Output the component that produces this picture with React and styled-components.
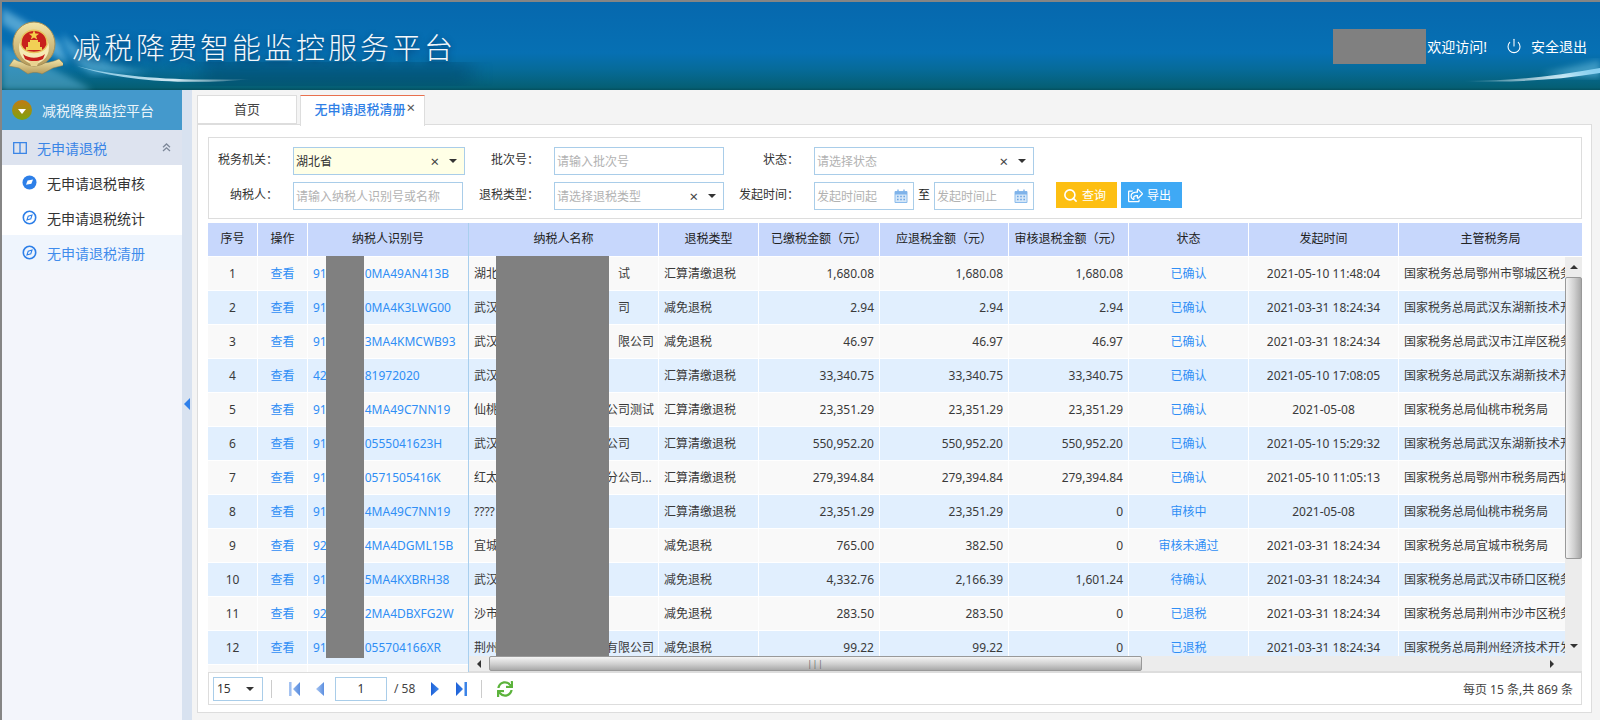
import React from 'react';
import styled, { createGlobalStyle } from 'styled-components';
import { Power, Search } from 'lucide-react';
import { FaRegShareSquare, FaSync } from 'react-icons/fa';

const Global = createGlobalStyle`
  html, body { margin: 0; padding: 0; background: #f4f4f4; }
  body { font-family: "Noto Sans", "Noto Sans CJK SC", sans-serif; font-size: 12px; color: #333; }
  * { box-sizing: border-box; }
`;

const Frame = styled.div`
  width: 1600px; height: 720px; overflow: hidden;
  border-top: 2px solid #858585; border-left: 2px solid #858585;
  display: flex; flex-direction: column;
`;
const Header = styled.header`
  position: relative; flex: none; height: 88px; display: flex; align-items: center;
  padding: 0 13px 0 5px; overflow: hidden;
  background: linear-gradient(180deg, #0668ae 0%, #0670b3 58%, #066b9a 76%, #055f74 97%, #04505f 100%);
`;
const HeaderArt = styled.svg`
  position: absolute; left: 0; top: 0; width: 1598px; height: 88px; pointer-events: none;
`;
const LogoMark = styled.svg`
  position: relative; flex: none; width: 56px; height: 54px; margin-top: 4px;
`;
const Title = styled.h1`
  position: relative; margin: 0 0 0 9px; font-size: 29px; font-weight: 300; letter-spacing: 3px; line-height: 1;
  color: #f4f8fb; text-shadow: 0 2px 6px rgba(0, 40, 80, .75); white-space: nowrap;
  font-family: "Noto Sans CJK SC", sans-serif;
`;
const UserBox = styled.div`
  position: relative; margin-left: auto; display: flex; align-items: center; color: #fff; font-size: 14px;
`;
const UserMask = styled.div`
  width: 93px; height: 35px; background: #808080; margin-right: 1px;
`;
const Logout = styled.span`
  display: flex; align-items: center; gap: 9px; margin-left: 19px;
`;

const Body = styled.div`
  flex: 1; min-height: 0; display: flex;
`;
const Sidebar = styled.aside`
  flex: none; width: 180px; background: #f3f5fb; display: flex; flex-direction: column;
`;
const SideTitle = styled.div`
  height: 40px; background: #4499cc; color: #eaf4fa; font-size: 14px;
  display: flex; align-items: center; gap: 10px; padding-left: 10px;
`;
const Orb = styled.span`
  width: 20px; height: 20px; border-radius: 50%;
  background: linear-gradient(180deg, #c27a12, #7ea30f);
  display: flex; align-items: center; justify-content: center;
  &::after { content: ""; margin-top: 2px; border: 4px solid transparent; border-top: 5px solid #fff; border-bottom: 0; }
`;
const SideGroup = styled.div`
  height: 35px; background: #dde3ef; color: #3a85e6; font-size: 14px;
  display: flex; align-items: center; gap: 10px; padding: 0 11px 0 11px;
`;
const Fold = styled.span`
  margin-left: auto; display: flex; color: #7d8899;
`;
const SideItem = styled.div`
  height: 35px; display: flex; align-items: center; gap: 10px; padding-left: 20px; font-size: 14px;
  background: ${p => (p.$active ? '#eff5fd' : '#fff')};
  color: ${p => (p.$active ? '#3f8cec' : '#333')};
`;
const Splitter = styled.div`
  flex: none; width: 10px; background: #d8e2f0; display: flex; align-items: center; justify-content: center;
  padding-bottom: 2px;
  &::after { content: ""; border: 6px solid transparent; border-right: 6px solid #2e7fea; border-left: 0; }
`;

const Main = styled.main`
  flex: none; width: 1400px; padding: 5px 0 0 5px; display: flex; flex-direction: column;
`;
const Tabs = styled.div`
  flex: none; display: flex; height: 30px; gap: 3px; position: relative; z-index: 1;
`;
const Tab = styled.div`
  height: ${p => (p.$active ? '31px' : '29px')};
  width: ${p => (p.$active ? '125px' : '100px')};
  background: #fff; font-size: 13px; text-align: center; line-height: 27px;
  border: 1px solid #ddd; ${p => (p.$active ? 'border-bottom: 0;' : '')}
  border-top-color: ${p => (p.$active ? '#e8704e' : '#ddd')};
  color: ${p => (p.$active ? '#2f7fe6' : '#444')};
  font-weight: ${p => (p.$active ? 500 : 400)};
  padding-right: ${p => (p.$active ? '5px' : '0')};
  position: relative;
`;
const TabClose = styled.span`
  position: absolute; right: 9px; top: 3px; font-size: 15px; line-height: 17px; font-weight: 400; color: #555;
`;
const Panel = styled.section`
  width: 1395px; height: 589px; margin-top: -1px; background: #fff; border: 1px solid #ddd;
  padding: 12px 9px 0 10px; display: flex; flex-direction: column;
`;
const FilterBox = styled.form`
  flex: none; height: 82px; border: 1px solid #ddd; padding-top: 9px; margin: 0 0 4px;
  display: grid; grid-template-columns: 84px 172px 89px 170px 90px 220px auto;
  grid-auto-rows: 28px; row-gap: 7px;
`;
const FieldLabel = styled.label`
  text-align: right; padding-right: 15px; line-height: 26px; color: #333; white-space: nowrap;
`;
const Field = styled.div`
  width: ${p => p.$w}px; height: 28px; border: 1px solid #a9cde9; display: flex; align-items: center;
  padding: 0 7px 0 2px; background: ${p => (p.$filled ? '#ffffe6' : '#fff')};
  color: ${p => (p.$filled ? '#333' : '#b2b2b2')}; white-space: nowrap;
`;
const ClearX = styled.span`
  margin-left: auto; color: #444; font-size: 15px; line-height: 1;
`;
const Caret = styled.span`
  margin-left: 10px; border: 4px solid transparent; border-top: 4px solid #333; border-bottom: 0;
`;
const DateRange = styled.div`
  display: flex; align-items: center;
`;
const DateSep = styled.span`
  width: 20px; text-align: center; color: #222; margin-top: -4px;
`;
const CalIcon = styled.svg`
  margin-left: auto; margin-right: -2px; width: 14px; height: 14px; flex: none;
`;
const Actions = styled.div`
  display: flex; gap: 4px; margin-left: 22px; align-self: start;
`;
const Btn = styled.button`
  width: 61px; height: 26px; border: 0; padding: 0 0 0 7px; color: #fff; font: inherit;
  background: ${p => (p.$kind === 'warn' ? '#fdbf12' : '#3fa9f5')};
  display: flex; align-items: center; gap: 4px;
`;

const DataGrid = styled.div`
  position: relative; flex: none; height: 449px; display: flex; overflow: hidden; border-left: 0;
`;
const Frozen = styled.div`
  flex: none; width: 261px; border-right: 1px solid #a9cfee; overflow: hidden;
`;
const ScrollPane = styled.div`
  flex: 1; min-width: 0; display: flex; flex-direction: column;
`;
const HeadRow = styled.div`
  display: flex; height: 34px; flex: none; border-bottom: 1px solid #fff;
`;
const HeadCell = styled.div`
  flex: none; width: ${p => p.$w}px; height: 33px; line-height: 32px; text-align: center;
  background: #c7d7fc; color: #222; border-right: ${p => (p.$last ? '0' : '1px solid #fff')}; white-space: nowrap;
`;
const BodyRow = styled.div`
  display: flex; height: 34px; flex: none; border-bottom: 1px solid #fff;
  background: ${p => (p.$even ? '#e1effe' : '#f9f9f9')};
`;
const Cell = styled.div`
  flex: none; width: ${p => p.$w}px; height: 33px; line-height: 33px; padding: 0 5px; overflow: hidden;
  white-space: nowrap; border-right: ${p => (p.$last ? '0' : '1px solid #fff')};
  text-align: ${p => p.$align || 'left'}; color: ${p => (p.$link ? '#2f8ef5' : '#3a3a3a')};
`;
const HiddenRun = styled.span`
  display: inline-block; width: ${p => p.$w}px;
`;
const Mask = styled.div`
  position: absolute; top: 33px; left: ${p => p.$left}px; width: ${p => p.$w}px; height: ${p => p.$h}px; background: #808080;
`;
const Middle = styled.div`
  flex: 1; min-height: 0; display: flex;
`;
const Viewport = styled.div`
  flex: 1; min-width: 0; overflow: hidden;
`;
const VScroll = styled.div`
  flex: none; width: 17px; background: #ececec; display: flex; flex-direction: column;
`;
const VThumb = styled.div`
  height: 282px; flex: none; border: 1px solid #999; border-radius: 2px;
  background: linear-gradient(90deg, #f4f4f4, #cfcfcf 55%, #a9a9a9);
`;
const HScroll = styled.div`
  flex: none; height: 16px; display: flex; background: #ececec; border-bottom: 1px solid #ddd;
`;
const HThumb = styled.div`
  width: 653px; flex: none; border: 1px solid #999; border-radius: 2px;
  background: linear-gradient(180deg, #f4f4f4, #cfcfcf 55%, #a9a9a9);
  display: flex; align-items: center; justify-content: center; color: #666; font-size: 8px; letter-spacing: 1px;
`;
const ArrowBox = styled.div`
  flex: none; width: ${p => (p.$v ? '17px' : '20px')}; height: ${p => (p.$v ? '20px' : '15px')};
  display: flex; align-items: center; justify-content: center;
  &::after {
    content: ""; border: 4px solid transparent;
    ${p => (p.$dir === 'up' ? 'border-bottom: 4px solid #333; border-top: 0;' : '')}
    ${p => (p.$dir === 'down' ? 'border-top: 4px solid #333; border-bottom: 0;' : '')}
    ${p => (p.$dir === 'left' ? 'border-right: 4px solid #333; border-left: 0;' : '')}
    ${p => (p.$dir === 'right' ? 'border-left: 4px solid #333; border-right: 0;' : '')}
  }
`;
const Spring = styled.div`
  flex: 1;
`;

const Pager = styled.div`
  flex: none; height: 33px; border: 1px solid #ddd; border-top: 1px solid #ddd; display: flex; align-items: center; padding-left: 4px; padding-right: 8px;
`;
const PageSize = styled.div`
  width: 50px; height: 24px; border: 1px solid #a9cde9; display: flex; align-items: center; padding: 0 8px 0 3px; color: #333;
`;
const PagerCaret = styled(Caret)`
  margin-left: auto;
`;
const PagerSep = styled.span`
  width: 1px; height: 18px; background: #ccc; margin: 0 ${p => p.$r || 0}px 0 ${p => p.$l || 0}px;
`;
const PageInput = styled.div`
  width: 52px; height: 24px; border: 1px solid #a9cde9; text-align: center; line-height: 22px; margin: 0 7px 0 11px;
`;
const PageIcon = styled.svg`
  flex: none; width: ${p => p.$w}px; height: 14px; margin-left: ${p => p.$ml}px;
`;
const PageOf = styled.span`
  color: #444;
`;
const Refresh = styled.span`
  display: flex; margin-left: 15px; color: #5cb33c;
`;
const Summary = styled.span`
  margin-left: auto; color: #444;
`;

const Logo = () => (
  <LogoMark viewBox="0 0 56 54">
    <defs>
      <linearGradient id="gold" x1="0" y1="0" x2="0" y2="1">
        <stop offset="0" stopColor="#f3e5a8" />
        <stop offset="1" stopColor="#b59a5a" />
      </linearGradient>
    </defs>
    <path d="M7 38 C15 44 40 44 52 38 L58 44 L46 47 L35 53 C31 51 25 51 21 53 L12 47 L2 45 Z" fill="url(#gold)" stroke="#8d7a4a" strokeWidth=".5" />
    <ellipse cx="27" cy="23" rx="21" ry="22" fill="url(#gold)" stroke="#a68f56" strokeWidth="1" />
    <path d="M12 26 C12 10 42 10 42 26 C42 38 33 42 27 44 C21 42 12 38 12 26 Z" fill="#f6e9b4" />
    <path d="M14 22 C14 5 40 5 40 22 L40 24 C36 34 18 34 14 24 Z" fill="#c8201c" stroke="#e8c55c" strokeWidth="1.4" />
    <path d="M27 9 l1.4 3.6 3.7 .1 -3 2.3 1.1 3.6 -3.2-2.1 -3.2 2.1 1.1-3.6 -3-2.3 3.7-.1z" fill="#f5cf4a" />
    <path d="M19 26 h16 v3 h-16z M21 21 h12 v5 h-12z M23 19 h8 v2 h-8z" fill="#f2cf55" />
    <path d="M16 33 C22 38 32 38 38 33 L36 38 C30 41 24 41 18 38 Z" fill="#c8201c" />
    <path d="M22 40 h10 l-2 5 h-6z" fill="#e9d391" />
  </LogoMark>
);

const Art = () => (
  <HeaderArt viewBox="0 0 1598 88">
    <defs>
      <filter id="soft"><feGaussianBlur stdDeviation="3" /></filter>
      <filter id="softer"><feGaussianBlur stdDeviation="10" /></filter>
      <filter id="thin"><feGaussianBlur stdDeviation=".7" /></filter>
      <linearGradient id="fade" x1="0" x2="1" y1="0" y2="0">
        <stop offset="0" stopColor="#9fdcf5" stopOpacity=".7" />
        <stop offset=".55" stopColor="#e8f8ff" stopOpacity=".9" />
        <stop offset="1" stopColor="#fff" stopOpacity="0" />
      </linearGradient>
      <linearGradient id="fadeR" x1="0" x2="1" y1="0" y2="0">
        <stop offset="0" stopColor="#fff" stopOpacity="0" />
        <stop offset=".75" stopColor="#e6f8ff" stopOpacity=".95" />
        <stop offset="1" stopColor="#9fe0ff" stopOpacity=".9" />
      </linearGradient>
    </defs>
    <path d="M0 42 L0 88 L90 88 C70 74 30 58 0 42Z" fill="#5fb2d8" opacity=".55" filter="url(#soft)" />
    <path d="M200 62 H470 V82 H200Z" fill="#033f63" opacity=".55" filter="url(#softer)" />
    <path d="M0 6 L58 40 L66 62 L0 22Z" fill="#8fd2ee" opacity=".55" filter="url(#soft)" />
    <path d="M60 32 C85 55 110 66 150 70 L90 72 C70 60 62 48 60 32Z" fill="#6fc0e4" opacity=".55" filter="url(#soft)" />
    <path d="M75 64 C120 76 180 79 250 77 C190 83 120 80 75 64Z" fill="url(#fade)" filter="url(#thin)" />
    <path d="M1460 79 C1510 79 1555 74 1598 66 L1598 71 C1555 78 1510 81 1460 79Z" fill="url(#fadeR)" filter="url(#thin)" />
    <path d="M1540 72 L1598 58 L1598 76Z" fill="#74c6ea" opacity=".5" filter="url(#soft)" />
  </HeaderArt>
);

const Compass = ({ filled }) => (
  <svg width="15" height="15" viewBox="0 0 15 15" style={{ flex: 'none' }}>
    {filled ? (
      <>
        <circle cx="7.5" cy="7.5" r="7" fill="#2d7fe8" />
        <path d="M4 9.8 L5.6 5.6 L11 4.6 L9.4 8.8Z" fill="#fff" />
      </>
    ) : (
      <>
        <circle cx="7.5" cy="7.5" r="6.2" fill="none" stroke="#2d7fe8" strokeWidth="1.6" />
        <path d="M5 10 L6.2 6.2 L10 5 L8.8 8.8Z" fill="none" stroke="#2d7fe8" strokeWidth="1.1" />
      </>
    )}
  </svg>
);

const Calendar = () => (
  <CalIcon viewBox="0 0 14 14">
    <path d="M1 2.5 h12 v11 h-12z" fill="#d5e7f8" stroke="#8cbcec" />
    <path d="M1 2.5 h12 v3 h-12z" fill="#7fb3ea" />
    <path d="M4 .5 v3 M10 .5 v3" stroke="#7fb3ea" strokeWidth="1.4" />
    <path d="M3 7.5 h1.6 M6.2 7.5 h1.6 M9.4 7.5 h1.6 M3 10.5 h1.6 M6.2 10.5 h1.6 M9.4 10.5 h1.6" stroke="#6ea6e4" strokeWidth="1.4" />
  </CalIcon>
);

const PagerGlyph = ({ kind, ml }) => {
  const id = `pg-${kind}`;
  const w = kind === 'first' || kind === 'last' ? 11 : 8;
  const shape = {
    first: 'M0 0 h2.5 v14 h-2.5z M11 0 v14 L4 7z',
    prev: 'M8 0 v14 L0 7z',
    next: 'M0 0 v14 L8 7z',
    last: 'M11 0 h-2.5 v14 h2.5z M0 0 v14 L7 7z',
  }[kind];
  return (
    <PageIcon $w={w} $ml={ml} viewBox={`0 0 ${w} 14`}>
      <defs>
        <linearGradient id={id} x1="0" x2="1" y1="0" y2="0">
          <stop offset="0" stopColor={kind === 'first' || kind === 'prev' ? '#a9c6f2' : '#1f62d8'} />
          <stop offset="1" stopColor={kind === 'first' || kind === 'prev' ? '#5c8fe0' : '#3f88ea'} />
        </linearGradient>
      </defs>
      <path d={shape} fill={`url(#${id})`} />
    </PageIcon>
  );
};

const BU = '国家税务总局';
const HT = '汇算清缴退税';
const JM = '减免退税';
const T1 = '2021-03-31 18:24:34';
const rows = [
  ['91', '0MA49AN413B', '湖北', 120, '试', HT, '1,680.08', '1,680.08', '1,680.08', '已确认', '2021-05-10 11:48:04', BU + '鄂州市鄂城区税务局'],
  ['91', '0MA4K3LWG00', '武汉', 120, '司', JM, '2.94', '2.94', '2.94', '已确认', T1, BU + '武汉东湖新技术开发区税务局'],
  ['91', '3MA4KMCWB93', '武汉', 120, '限公司', JM, '46.97', '46.97', '46.97', '已确认', T1, BU + '武汉市江岸区税务局'],
  ['42', '81972020', '武汉', 120, '', HT, '33,340.75', '33,340.75', '33,340.75', '已确认', '2021-05-10 17:08:05', BU + '武汉东湖新技术开发区税务局'],
  ['91', '4MA49C7NN19', '仙桃', 108, '公司测试', HT, '23,351.29', '23,351.29', '23,351.29', '已确认', '2021-05-08', BU + '仙桃市税务局'],
  ['91', '0555041623H', '武汉', 108, '公司', HT, '550,952.20', '550,952.20', '550,952.20', '已确认', '2021-05-10 15:29:32', BU + '武汉东湖新技术开发区税务局'],
  ['91', '0571505416K', '红太', 108, '分公司...', HT, '279,394.84', '279,394.84', '279,394.84', '已确认', '2021-05-10 11:05:13', BU + '鄂州市税务局西城分局'],
  ['91', '4MA49C7NN19', '????', 0, '', HT, '23,351.29', '23,351.29', '0', '审核中', '2021-05-08', BU + '仙桃市税务局'],
  ['92', '4MA4DGML15B', '宜城', 0, '', JM, '765.00', '382.50', '0', '审核未通过', T1, BU + '宜城市税务局'],
  ['91', '5MA4KXBRH38', '武汉', 0, '', JM, '4,332.76', '2,166.39', '1,601.24', '待确认', T1, BU + '武汉市硚口区税务局'],
  ['92', '2MA4DBXFG2W', '沙市', 0, '', JM, '283.50', '283.50', '0', '已退税', T1, BU + '荆州市沙市区税务局'],
  ['91', '055704166XR', '荆州', 108, '有限公司', JM, '99.22', '99.22', '0', '已退税', T1, BU + '荆州经济技术开发区税务局'],
];

const frozenHead = [['序号', 50], ['操作', 50], ['纳税人识别号', 160]];
const mainHead = [
  ['纳税人名称', 190], ['退税类型', 100], ['已缴税金额（元）', 121], ['应退税金额（元）', 129],
  ['审核退税金额（元）', 120], ['状态', 120], ['发起时间', 150], ['主管税务局', 183],
];

export default function App() {
  return (
    <>
      <Global />
      <Frame>
        <Header>
          <Art />
          <Logo />
          <Title>减税降费智能监控服务平台</Title>
          <UserBox>
            <UserMask />
            欢迎访问!
            <Logout><Power size={16} strokeWidth={1.6} />安全退出</Logout>
          </UserBox>
        </Header>
        <Body>
          <Sidebar>
            <SideTitle><Orb />减税降费监控平台</SideTitle>
            <SideGroup>
              <svg width="14" height="12" viewBox="0 0 14 12" style={{ flex: 'none' }}>
                <path d="M.7.7 h12.6 v10.6 h-12.6z M7 .7 v10.6" fill="none" stroke="#3a85e6" strokeWidth="1.3" />
              </svg>
              无申请退税
              <Fold>
                <svg width="9" height="9" viewBox="0 0 9 9">
                  <path d="M1 4.2 L4.5 1 L8 4.2 M1 8 L4.5 4.8 L8 8" fill="none" stroke="currentColor" strokeWidth="1.3" />
                </svg>
              </Fold>
            </SideGroup>
            <SideItem><Compass filled />无申请退税审核</SideItem>
            <SideItem><Compass />无申请退税统计</SideItem>
            <SideItem $active><Compass />无申请退税清册</SideItem>
          </Sidebar>
          <Splitter />
          <Main>
            <Tabs>
              <Tab>首页</Tab>
              <Tab $active>无申请退税清册<TabClose>×</TabClose></Tab>
            </Tabs>
            <Panel>
              <FilterBox>
                <FieldLabel>税务机关：</FieldLabel>
                <Field $w={172} $filled>湖北省<ClearX>×</ClearX><Caret /></Field>
                <FieldLabel>批次号：</FieldLabel>
                <Field $w={170}>请输入批次号</Field>
                <FieldLabel>状态：</FieldLabel>
                <Field $w={220}>请选择状态<ClearX>×</ClearX><Caret /></Field>
                <span />
                <FieldLabel>纳税人：</FieldLabel>
                <Field $w={170}>请输入纳税人识别号或名称</Field>
                <FieldLabel>退税类型：</FieldLabel>
                <Field $w={170}>请选择退税类型<ClearX>×</ClearX><Caret /></Field>
                <FieldLabel>发起时间：</FieldLabel>
                <DateRange>
                  <Field $w={100}>发起时间起<Calendar /></Field>
                  <DateSep>至</DateSep>
                  <Field $w={100}>发起时间止<Calendar /></Field>
                </DateRange>
                <Actions>
                  <Btn type="button" $kind="warn"><Search size={15} strokeWidth={2.6} />查询</Btn>
                  <Btn type="button"><FaRegShareSquare size={15} />导出</Btn>
                </Actions>
              </FilterBox>
              <DataGrid>
                <Frozen>
                  <HeadRow>
                    {frozenHead.map(([t, w], i) => <HeadCell key={t} $w={w} $last={i === 2}>{t}</HeadCell>)}
                  </HeadRow>
                  {rows.map((r, i) => (
                    <BodyRow key={i} $even={i % 2 === 1}>
                      <Cell $w={50} $align="center">{i + 1}</Cell>
                      <Cell $w={50} $align="center" $link>查看</Cell>
                      <Cell $w={160} $last $link>{r[0]}<HiddenRun $w={38} />{r[1]}</Cell>
                    </BodyRow>
                  ))}
                  <BodyRow>
                    <Cell $w={50} /><Cell $w={50} /><Cell $w={160} $last />
                  </BodyRow>
                </Frozen>
                <ScrollPane>
                  <HeadRow>
                    {mainHead.map(([t, w], i) => <HeadCell key={t} $w={w} $last={i === 7}>{t}</HeadCell>)}
                  </HeadRow>
                  <Middle>
                    <Viewport>
                      {rows.map((r, i) => (
                        <BodyRow key={i} $even={i % 2 === 1}>
                          <Cell $w={190}>{r[2]}<HiddenRun $w={r[3]} />{r[4]}</Cell>
                          <Cell $w={100}>{r[5]}</Cell>
                          <Cell $w={121} $align="right">{r[6]}</Cell>
                          <Cell $w={129} $align="right">{r[7]}</Cell>
                          <Cell $w={120} $align="right">{r[8]}</Cell>
                          <Cell $w={120} $align="center" $link>{r[9]}</Cell>
                          <Cell $w={150} $align="center">{r[10]}</Cell>
                          <Cell $w={183} $last>{r[11]}</Cell>
                        </BodyRow>
                      ))}
                    </Viewport>
                    <VScroll>
                      <ArrowBox $v $dir="up" />
                      <VThumb />
                      <Spring />
                      <ArrowBox $v $dir="down" />
                    </VScroll>
                  </Middle>
                  <HScroll>
                    <ArrowBox $dir="left" />
                    <HThumb>|||</HThumb>
                    <Spring />
                    <ArrowBox $dir="right" />
                    <ArrowBox />
                  </HScroll>
                </ScrollPane>
                <Mask $left={118} $w={38} $h={402} />
                <Mask $left={288} $w={113} $h={400} />
              </DataGrid>
              <Pager>
                <PageSize>15<PagerCaret /></PageSize>
                <PagerSep $l={8} />
                <PagerGlyph kind="first" ml={17} />
                <PagerGlyph kind="prev" ml={16} />
                <PageInput>1</PageInput>
                <PageOf>/ 58</PageOf>
                <PagerGlyph kind="next" ml={16} />
                <PagerGlyph kind="last" ml={17} />
                <PagerSep $l={14} />
                <Refresh><FaSync size={16} /></Refresh>
                <Summary>每页 15 条,共 869 条</Summary>
              </Pager>
            </Panel>
          </Main>
        </Body>
      </Frame>
    </>
  );
}
